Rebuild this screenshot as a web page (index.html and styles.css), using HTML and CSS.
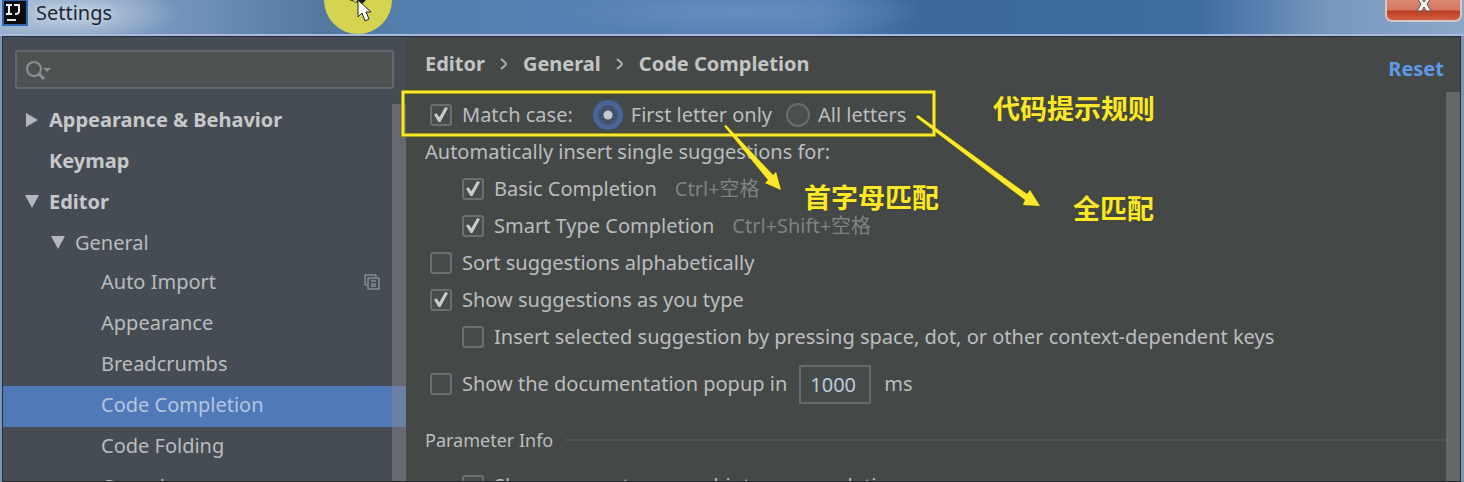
FILE: index.html
```html
<!DOCTYPE html>
<html lang="en">
<head>
<meta charset="utf-8">
<title>Settings</title>
<link rel="stylesheet" href="styles.css">
</head>
<body>
<div class="window">
  <header class="titlebar">
    <svg class="app-icon" width="26" height="26" viewBox="0 0 26 26" aria-hidden="true">
      <rect width="26" height="26" fill="#2f66ad"/>
      <rect x="2" y="1" width="22" height="23" fill="#0b0c10"/>
      <path d="M4 5h6M7 5v9M4 14h6M12 5h6M17 5v6q0 3-4 3" fill="none" stroke="#eceff2" stroke-width="2"/>
      <path d="M5 20h9" stroke="#dfe3e8" stroke-width="2"/>
    </svg>
    <h1 class="title">Settings</h1>
    <button class="close" type="button" aria-label="Close">
      <svg width="18" height="16" viewBox="0 0 18 16" aria-hidden="true">
        <path d="M2 -2h4l3 4 3-4h4l-4 6 4 7h-5l-2-4-2 4H2l4-7z" fill="#f4f4f4" stroke="#6b4a48" stroke-width="1"/>
      </svg>
    </button>
  </header>
  <div class="body">
    <aside class="sidebar">
      <div class="search">
        <svg class="search-icon" width="28" height="24" viewBox="0 0 28 24" fill="none" stroke="#8b9092" aria-hidden="true">
          <circle cx="9" cy="11" r="7" stroke-width="2"/>
          <path d="M14 16l5 5" stroke-width="3"/>
          <path d="M18 10h8l-4 4z" fill="#8b9092" stroke="none"/>
        </svg>
        <input class="search-input" type="text" aria-label="Search settings">
      </div>
      <nav class="tree" aria-label="Settings sections">
        <a class="item top" href="#"><svg class="arrow" width="14" height="16" viewBox="0 0 14 16"><path d="M1 1l12 7-12 7z"/></svg>Appearance &amp; Behavior</a>
        <a class="item top" href="#"><span class="arrow-space"></span>Keymap</a>
        <a class="item top" href="#"><svg class="arrow" width="14" height="16" viewBox="0 0 14 16"><path d="M0 1h14L7 14z"/></svg>Editor</a>
        <a class="item group" href="#"><svg class="arrow" width="14" height="16" viewBox="0 0 14 16"><path d="M0 1h14L7 14z"/></svg>General</a>
        <a class="item leaf" href="#">Auto Import
          <svg class="copy" width="16" height="16" viewBox="0 0 16 16" fill="none" stroke="#a3a8ab" aria-hidden="true"><path d="M3 11H1V1h11v2"/><rect x="4" y="4" width="11" height="11"/><path d="M7 7h5M7 10h5M7 12h5"/></svg></a>
        <a class="item leaf" href="#">Appearance</a>
        <a class="item leaf" href="#">Breadcrumbs</a>
        <a class="item leaf selected" href="#" aria-current="page">Code Completion</a>
        <a class="item leaf" href="#">Code Folding</a>
        <a class="item leaf" href="#">Console</a>
      </nav>
      <div class="thumb side-thumb"></div>
    </aside>
    <main class="main">
      <div class="heading">
        <nav class="crumbs" aria-label="Breadcrumb">
          <span>Editor</span><svg class="chevron" width="8" height="12" viewBox="0 0 8 12"><path d="M1 1q5 4 5 5t-5 5"/></svg>
          <span>General</span><svg class="chevron" width="8" height="12" viewBox="0 0 8 12"><path d="M1 1q5 4 5 5t-5 5"/></svg>
          <span>Code Completion</span>
        </nav>
        <a class="reset" href="#">Reset</a>
      </div>
      <form class="options">
        <div class="row">
          <label class="option match"><input class="check" type="checkbox" checked>Match case:</label>
          <label class="choice"><input class="radio" type="radio" name="case" checked>First letter only</label>
          <label class="choice"><input class="radio" type="radio" name="case">All letters</label>
        </div>
        <div class="row">Automatically insert single suggestions for:</div>
        <div class="row nested"><label class="option"><input class="check" type="checkbox" checked>Basic Completion</label><span class="keys">Ctrl+空格</span></div>
        <div class="row nested"><label class="option"><input class="check" type="checkbox" checked>Smart Type Completion</label><span class="keys">Ctrl+Shift+空格</span></div>
        <div class="row"><label class="option"><input class="check" type="checkbox">Sort suggestions alphabetically</label></div>
        <div class="row"><label class="option"><input class="check" type="checkbox" checked>Show suggestions as you type</label></div>
        <div class="row nested"><label class="option"><input class="check" type="checkbox">Insert selected suggestion by pressing space, dot, or other context-dependent keys</label></div>
        <div class="row delay"><label class="option"><input class="check" type="checkbox">Show the documentation popup in</label><input class="number" type="text" value="1000" aria-label="Delay in milliseconds"><span>ms</span></div>
        <div class="section"><h2 class="section-title">Parameter Info</h2><hr class="rule"></div>
        <div class="row nested"><label class="option"><input class="check" type="checkbox">Show parameter name hints on completion</label></div>
      </form>
      <div class="thumb main-thumb"></div>
    </main>
  </div>
  <div class="notes" lang="zh">
    <svg class="marks" width="1464" height="482" viewBox="0 0 1464 482" aria-hidden="true">
      <circle cx="358" cy="0" r="34" fill="#d5d450"/>
      <path d="M349 0h4l2 3 3-3h8l-4 4z" fill="#17191b"/>
      <path d="M358 0v17l4-4 3 8 4-2-3-7h5z" fill="#fff" stroke="#252525" stroke-width="1"/>
      <g class="shade">
        <rect x="403" y="92" width="531" height="43" fill="none" stroke="#fbe82b" stroke-width="3"/>
        <path d="M724 126l2-1 47 50 3-3 5 18-16-7 3-3z" fill="#fbe82b"/>
        <path d="M916 117l2-2 109 79 3-4 10 16-17-1 2-5z" fill="#fbe82b"/>
      </g>
    </svg>
    <span class="note note-rule">代码提示规则</span>
    <span class="note note-first">首字母匹配</span>
    <span class="note note-all">全匹配</span>
  </div>
</div>
</body>
</html>
```
FILE: styles.css
```css
* { box-sizing: border-box; }

body {
  margin: 0;
  font-family: "Noto Sans", "Noto Sans CJK SC", sans-serif;
  font-size: 20px;
  line-height: 28px;
  color: #bcbebf;
}

.window {
  position: relative;
  display: flex;
  flex-direction: column;
  height: 100vh;
  overflow: hidden;
  background: #7d96b8;
}

.titlebar {
  display: flex;
  flex: none;
  align-items: flex-start;
  height: 36px;
  padding-left: 2px;
  border-bottom: 2px solid #a9bbd8;
  background:
    radial-gradient(ellipse 110px 30px at 70px 14px, #b4c5da 20%, transparent),
    radial-gradient(ellipse 190px 26px at 740px 12px, #6d92c2aa 10%, transparent),
    linear-gradient(90deg, #93acc9 0, #6e90ba 200px, #54789f 320px, #547faf 420px, #5680b4 820px, #3a689b 920px, #3e6da2 1200px, #7898bd 1330px, #8ba7c9 100%);
}

.app-icon { flex: none; }

.title {
  margin: 0 auto 0 8px;
  font-size: 20px;
  font-weight: 400;
  line-height: 26px;
  color: #1d2634;
  text-shadow: 0 0 6px #d5e0ec;
}

.close {
  display: flex;
  justify-content: center;
  width: 77px;
  height: 22px;
  margin-right: 2px;
  padding: 0;
  border: 2px solid #d9c5c8;
  border-top: 0;
  border-radius: 0 0 7px 7px;
  background: linear-gradient(#d98872 0, #d67661 10px, #bd3e25 11px, #d25f3e);
}

.body {
  display: grid;
  flex: 1;
  grid-template-columns: 403px minmax(0, 1fr);
  min-height: 0;
  margin: 0 3px 0 2px;
  border: 1px solid #242d3d;
  border-bottom-color: #26292c;
}

.sidebar,
.main {
  position: relative;
  min-width: 0;
  overflow: hidden;
}

.sidebar { background: #464c53; }

.search {
  display: flex;
  align-items: center;
  height: 39px;
  margin: 13px 12px 10px;
  padding-left: 8px;
  border: 2px solid #62686b;
  border-radius: 3px;
  background: #4d5352;
}

.search-input {
  flex: 1;
  min-width: 0;
  border: 0;
  outline: 0;
  background: none;
  color: inherit;
  font: inherit;
}

.tree { display: flex; flex-direction: column; }

.item {
  display: flex;
  flex: none;
  align-items: center;
  height: 41px;
  color: #b9bcbf;
  text-decoration: none;
}

.top { padding-left: 22px; font-weight: 700; color: #c6c8ca; }
.group { padding-left: 48px; }
.leaf { padding-bottom: 3px; padding-left: 98px; }
.selected { background: #5079b8; color: #b4c6df; }

.arrow { flex: none; margin-right: 10px; fill: #b5b8bb; }
.arrow-space { width: 24px; }
.copy { margin-left: auto; margin-right: 26px; }

.thumb {
  position: absolute;
  right: 0;
  bottom: 0;
  width: 14px;
  background: #85878b80;
}

.side-thumb { top: 67px; }
.main-thumb { top: 55px; }

.main { padding-left: 19px; background: #444847; }

.heading {
  display: flex;
  justify-content: space-between;
  height: 59px;
  padding: 13px 16px 0 0;
}

.crumbs {
  display: flex;
  align-items: center;
  gap: 15px;
  height: 28px;
  font-weight: 700;
  color: #c3c5c5;
}

.chevron { fill: none; stroke: #b0b3b3; stroke-width: 2; }

.reset {
  padding-top: 5px;
  font-weight: 700;
  color: #5f9ae8;
  text-decoration: none;
}

.row { display: flex; align-items: center; height: 37px; white-space: nowrap; }
.nested { padding-left: 32px; }
.option { display: flex; align-items: center; padding-left: 5px; gap: 10px; }
.match { margin-right: 20px; }
.choice { display: flex; align-items: center; gap: 8px; margin-right: 14px; }
.keys { margin-left: 18px; color: #7f8383; }

.check {
  display: grid;
  flex: none;
  place-items: center;
  appearance: none;
  width: 22px;
  height: 22px;
  margin: 0;
  border: 2px solid #6b6f70;
  border-radius: 3px;
  background: #484c4c;
}

.check:checked::after {
  content: "";
  width: 14px;
  height: 15px;
  background: #c9cccc;
  clip-path: polygon(0 50%, 18% 42%, 38% 68%, 80% 0, 100% 6%, 46% 100%, 32% 100%);
}

.radio {
  flex: none;
  appearance: none;
  width: 24px;
  height: 24px;
  margin: 0;
  border: 2px solid #696d6e;
  border-radius: 50%;
  background: #4b4f4f;
}

.radio:checked {
  width: 30px;
  height: 30px;
  border: 5px solid #456696;
  background: radial-gradient(circle, #c7cacb 4px, #42526a 5px);
}

.delay { height: 58px; }

.number {
  width: 72px;
  height: 39px;
  margin: 0 13px 0 12px;
  padding: 0 9px;
  border: 2px solid #666a6b;
  outline: 0;
  background: #454a4a;
  color: #bfcadb;
  font: inherit;
}

.section { display: flex; align-items: center; gap: 12px; height: 54px; padding-right: 14px; }
.section-title { margin: 0; font-size: 18px; font-weight: 400; }
.rule { flex: 1; margin: 0; border: 0; border-top: 2px solid #505454; }

.notes { position: absolute; inset: 0; pointer-events: none; }
.marks { position: absolute; top: 0; left: 0; }
.shade { filter: drop-shadow(0 0 1px #5c5500); }

.note {
  position: absolute;
  font-family: "Noto Sans CJK SC", sans-serif;
  font-size: 27px;
  font-weight: 700;
  line-height: 36px;
  color: #fbe82b;
  text-shadow: 0 0 2px #4c4700;
}

.note-rule { top: 90px; left: 993px; }
.note-first { top: 179px; left: 804px; }
.note-all { top: 190px; left: 1073px; }
```
